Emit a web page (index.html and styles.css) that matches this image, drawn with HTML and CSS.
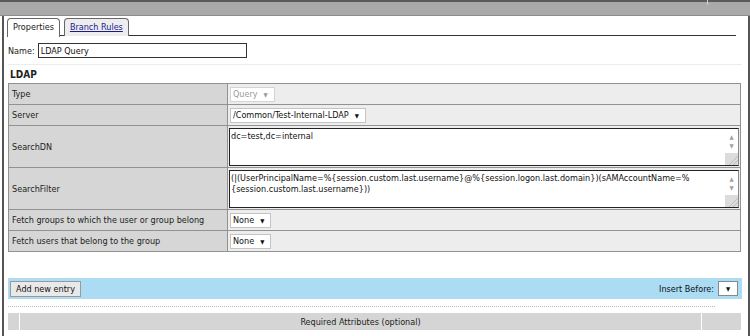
FILE: index.html
```html
<!DOCTYPE html>
<html lang="en">
<head>
    <meta charset="UTF-8">
    <title>LDAP Query</title>
    <link rel="stylesheet" href="styles.css">
</head>
<body>

    <div class="topbar"><span class="topmark"></span></div>

    <div class="page">
        <div class="tabs">
            <div class="tab active">Properties</div>
            <div class="tab"><a href="#">Branch Rules</a></div>
        </div>

        <div class="name-row">
            <label for="name">Name:</label>
            <input type="text" id="name" class="name-input" value="LDAP Query">
        </div>

        <div class="section-title">LDAP</div>

        <table class="props">
            <tr class="row-sm">
                <td class="label">Type</td>
                <td class="value"><span class="select disabled">Query <i class="arrow">▼</i></span></td>
            </tr>
            <tr class="row-sm">
                <td class="label">Server</td>
                <td class="value"><span class="select">/Common/Test-Internal-LDAP <i class="arrow">▼</i></span></td>
            </tr>
            <tr class="row-lg">
                <td class="label">SearchDN</td>
                <td class="value">
                    <div class="ta-wrap">
                        <textarea>dc=test,dc=internal</textarea>
                        <div class="scroll">
                            <span class="sb-arrow">▲</span>
                            <span class="sb-arrow">▼</span>
                            <span class="grip"></span>
                        </div>
                    </div>
                </td>
            </tr>
            <tr class="row-lg">
                <td class="label">SearchFilter</td>
                <td class="value">
                    <div class="ta-wrap">
                        <textarea>(|(UserPrincipalName=%{session.custom.last.username}@%{session.logon.last.domain})(sAMAccountName=%
{session.custom.last.username}))</textarea>
                        <div class="scroll">
                            <span class="sb-arrow">▲</span>
                            <span class="sb-arrow">▼</span>
                            <span class="grip"></span>
                        </div>
                    </div>
                </td>
            </tr>
            <tr class="row-sm">
                <td class="label">Fetch groups to which the user or group belong</td>
                <td class="value"><span class="select">None <i class="arrow">▼</i></span></td>
            </tr>
            <tr class="row-sm">
                <td class="label">Fetch users that belong to the group</td>
                <td class="value"><span class="select">None <i class="arrow">▼</i></span></td>
            </tr>
        </table>

        <div class="entry-bar">
            <button class="add-btn">Add new entry</button>
            <div class="insert">
                Insert Before:
                <span class="select mini"><i class="arrow">▼</i></span>
            </div>
        </div>

        <div class="dots"></div>

        <table class="required">
            <tr>
                <td class="req-first"></td>
                <td class="req-title">Required Attributes (optional)</td>
                <td class="req-last"></td>
            </tr>
        </table>
    </div>

</body>
</html>
```

FILE: styles.css
```css
body {
    margin: 0;
    font-family: 'DejaVu Sans Condensed', 'DejaVu Sans', sans-serif;
    font-stretch: condensed;
    font-size: 9px;
    color: #222;
    background-color: #ffffff;
}

.topbar {
    position: relative;
    height: 13px;
    background-color: #a9a9a9;
    border-top: 2px solid #5a5a5a;
    border-bottom: 1px solid #8c8c8c;
}

.topmark {
    position: absolute;
    left: 707px;
    top: -2px;
    width: 1px;
    height: 5px;
    background-color: #d0d0d0;
}

.page {
    margin-left: 2px;
    border-left: 2px solid #555;
    border-right: 2px solid #555;
    padding: 2px 6px 6px 4px;
    height: 320px;
    box-sizing: border-box;
}

/* Tabs */
.tabs {
    display: flex;
    gap: 4px;
    margin-left: -1px;
    margin-right: 6px;
    border-bottom: 1px solid #333;
    height: 17px;
}

.tab {
    border: 1px solid #666;
    border-bottom: none;
    border-radius: 4px 4px 0 0;
    padding: 3px 5px 0;
    background-color: #ededf0;
    height: 14px;
}

.tab.active {
    background-color: #ffffff;
    height: 15px;
    margin-bottom: -1px;
}

.tab a {
    color: #1a1a8a;
}

/* Name */
.name-row {
    display: flex;
    align-items: center;
    gap: 3px;
    margin-top: 7px;
    padding-bottom: 6px;
    border-bottom: 1px solid #ececec;
}

.name-input {
    width: 209px;
    height: 15px;
    box-sizing: border-box;
    border: 1px solid #333;
    padding: 0 2px;
    font-family: inherit;
    font-stretch: condensed;
    font-size: 9px;
    color: #111;
}

.section-title {
    font-weight: bold;
    font-size: 10px;
    padding: 4px 2px 0;
    height: 14px;
}

/* Properties table */
.props {
    width: 733px;
    border-collapse: collapse;
    border: 1px solid #8a8a8a;
}

.props td {
    border: 1px solid #929292;
    padding: 0 3px;
}

.props .label {
    width: 212px;
    background-color: #d6d6d6;
}

.props .value {
    background-color: #ededed;
    padding: 0 1px;
}

.row-sm td {
    height: 20px;
}

.row-lg td {
    height: 41px;
}

.select {
    display: inline-flex;
    align-items: center;
    height: 15px;
    box-sizing: border-box;
    border: 1px solid #c4c4c4;
    background-color: #ffffff;
    padding: 0 6px 0 2px;
    color: #111;
    margin-left: 1px;
}

.select.disabled {
    color: #9a9a9a;
    border-color: #d4d4d4;
}

.arrow {
    font-style: normal;
    font-size: 6px;
    margin-left: 6px;
}

.ta-wrap {
    display: flex;
    height: 38px;
    box-sizing: border-box;
    border: 1px solid #222;
    border-right-color: #888;
    background-color: #ffffff;
}

.ta-wrap textarea {
    flex: 1;
    min-width: 0;
    border: none;
    resize: none;
    padding: 2px 1px;
    font-family: inherit;
    font-stretch: condensed;
    font-size: 9px;
    line-height: 11px;
    color: #111;
    outline: none;
    overflow: hidden;
    white-space: pre;
}

.scroll {
    width: 13px;
    display: flex;
    flex-direction: column;
    align-items: center;
}

.sb-arrow {
    font-size: 6px;
    color: #a0a0a0;
    height: 9px;
    line-height: 9px;
}

.sb-arrow:first-child {
    margin-top: 3px;
}

.grip {
    margin-top: auto;
    width: 13px;
    height: 12px;
    background: linear-gradient(135deg, #dcdcdc 60%, #888 61%, #dcdcdc 66%, #dcdcdc 76%, #888 77%, #dcdcdc 82%);
}

/* Add entry bar */
.entry-bar {
    display: flex;
    align-items: center;
    justify-content: space-between;
    margin-top: 26px;
    height: 21px;
    padding: 0 4px 0 2px;
    background-color: #abdcf4;
}

.add-btn {
    height: 16px;
    padding: 0 5px;
    font-family: inherit;
    font-stretch: condensed;
    font-size: 9px;
    color: #111;
    background-color: #e9e9e9;
    border: 1px solid #9a9a9a;
}

.insert {
    display: flex;
    align-items: center;
    gap: 3px;
    color: #111;
}

.select.mini {
    width: 20px;
    padding: 0;
    justify-content: center;
    border-color: #888;
}

.select.mini .arrow {
    margin: 0;
}

.dots {
    margin-top: 7px;
    width: 707px;
    border-top: 1px dotted #b8b8b8;
}

/* Required attributes */
.required {
    width: 733px;
    margin-top: 6px;
    border-collapse: collapse;
}

.required td {
    height: 17px;
    padding: 0;
    background-color: #d5d5d5;
    color: #222;
}

.req-first {
    width: 11px;
    border-right: 1px solid #ffffff;
}

.req-title {
    text-align: center;
}

.req-last {
    width: 39px;
    border-left: 1px solid #ffffff;
}
```
